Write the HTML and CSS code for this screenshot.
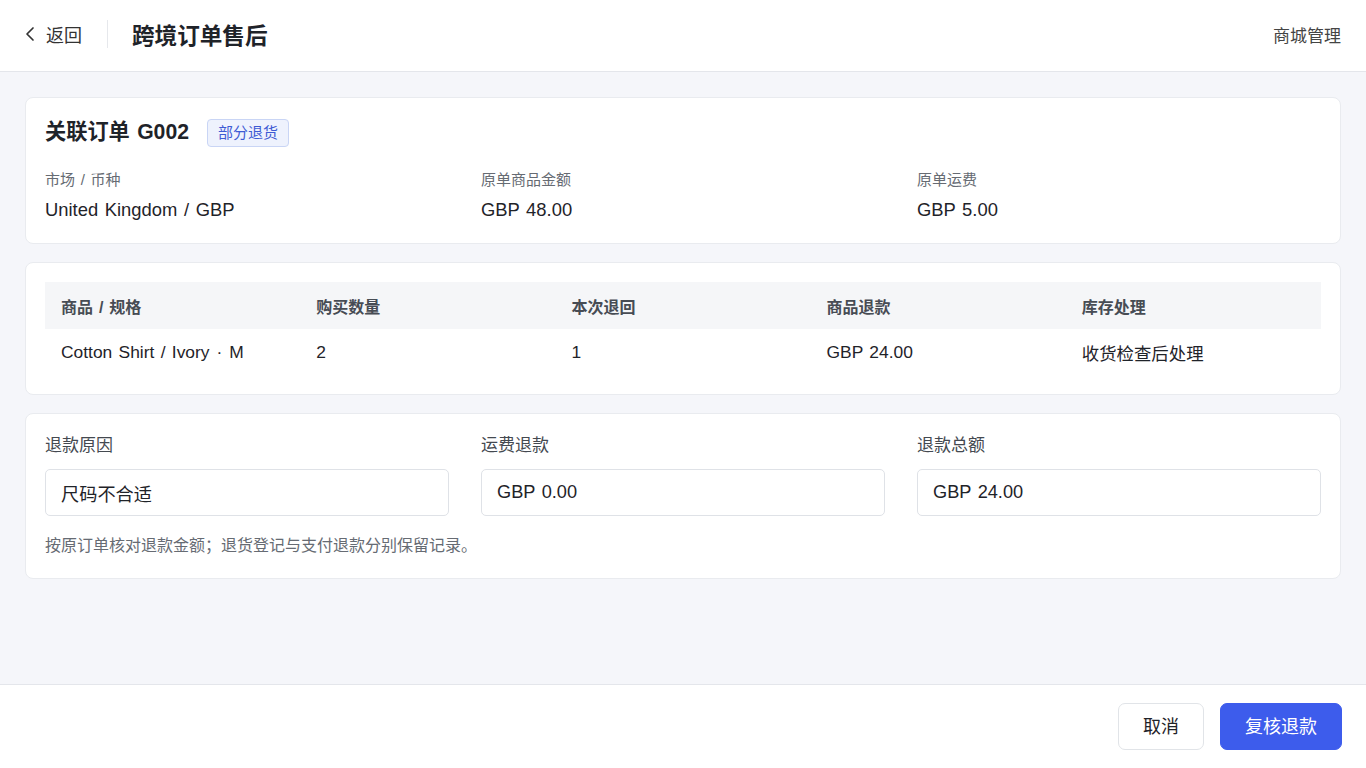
FILE: index.html
```html
<!DOCTYPE html>
<html lang="zh-CN">
<head>
<meta charset="utf-8">
<title>跨境订单售后</title>
<link rel="stylesheet" href="styles.css">
</head>
<body>
<div class="app">
  <header class="topbar">
    <div class="topbar-left">
      <a class="back" href="#">
        <svg class="back-icon" width="12" height="16" viewBox="0 0 12 16"><polyline points="9,2 3,8 9,14" fill="none" stroke="#333" stroke-width="1.7" stroke-linecap="round" stroke-linejoin="round"/></svg>
        <span>返回</span>
      </a>
      <span class="divider"></span>
      <h1 class="page-title">跨境订单售后</h1>
    </div>
    <div class="topbar-right">商城管理</div>
  </header>

  <main class="content">
    <section class="card card-order">
      <div class="order-head">
        <h2 class="order-title">关联订单 G002</h2>
        <span class="badge">部分退货</span>
      </div>
      <div class="info-grid">
        <div class="info">
          <div class="info-label">市场 / 币种</div>
          <div class="info-value">United Kingdom / GBP</div>
        </div>
        <div class="info">
          <div class="info-label">原单商品金额</div>
          <div class="info-value">GBP 48.00</div>
        </div>
        <div class="info">
          <div class="info-label">原单运费</div>
          <div class="info-value">GBP 5.00</div>
        </div>
      </div>
    </section>

    <section class="card card-table">
      <div class="table">
        <div class="tr th">
          <div class="td">商品 / 规格</div>
          <div class="td">购买数量</div>
          <div class="td">本次退回</div>
          <div class="td">商品退款</div>
          <div class="td">库存处理</div>
        </div>
        <div class="tr">
          <div class="td">Cotton Shirt / Ivory<span class="dot">·</span>M</div>
          <div class="td">2</div>
          <div class="td">1</div>
          <div class="td">GBP 24.00</div>
          <div class="td">收货检查后处理</div>
        </div>
      </div>
    </section>

    <section class="card card-form">
      <div class="form-grid">
        <div class="field">
          <label class="field-label">退款原因</label>
          <div class="input">尺码不合适</div>
        </div>
        <div class="field">
          <label class="field-label">运费退款</label>
          <div class="input">GBP 0.00</div>
        </div>
        <div class="field">
          <label class="field-label">退款总额</label>
          <div class="input">GBP 24.00</div>
        </div>
      </div>
      <p class="note">按原订单核对退款金额；退货登记与支付退款分别保留记录。</p>
    </section>
  </main>

  <footer class="footer">
    <button class="btn btn-default">取消</button>
    <button class="btn btn-primary">复核退款</button>
  </footer>
</div>
</body>
</html>
```

FILE: styles.css
```css
* { box-sizing: border-box; }
html, body { margin: 0; padding: 0; }
body {
  font-family: "Liberation Sans", "Noto Sans CJK SC", sans-serif;
  color: #1f2329;
  background: #f5f6fa;
  word-spacing: 1.5px;
}
.app {
  height: 100vh;
  display: flex;
  flex-direction: column;
}
.topbar {
  height: 72px;
  flex: none;
  background: #fff;
  border-bottom: 1px solid #e4e6eb;
  display: flex;
  align-items: center;
  justify-content: space-between;
  padding: 0 25px 3px 24px;
}
.topbar-left {
  display: flex;
  align-items: center;
}
.back {
  display: flex;
  align-items: center;
  gap: 10px;
  color: #333;
  text-decoration: none;
  font-size: 18px;
}
.back-icon { display: block; }
.divider {
  width: 1px;
  height: 28px;
  background: #e6e8ec;
  margin: 0 24px 0 25px;
}
.page-title {
  margin: 0;
  font-size: 22.6px;
  font-weight: 700;
  color: #1f2329;
}
.topbar-right {
  font-size: 17px;
  color: #444;
}

.content {
  flex: 1;
  padding: 25px 25px;
  display: flex;
  flex-direction: column;
  gap: 18px;
}
.card {
  background: #fff;
  border: 1px solid #e9ebef;
  border-radius: 8px;
  padding: 0 19px;
}

.card-order { padding-top: 21px; padding-bottom: 21px; }
.order-head {
  display: flex;
  align-items: center;
  gap: 18px;
  height: 28px;
}
.order-title {
  margin: 0;
  font-size: 21.2px;
  line-height: 26px;
  padding-bottom: 2px;
  font-weight: 700;
  color: #1f2329;
}
.badge {
  height: 28px;
  line-height: 26px;
  padding: 0 10px;
  font-size: 15px;
  color: #3e5bd4;
  background: #eef2fd;
  border: 1px solid #c9d5f5;
  border-radius: 4px;
}
.info-grid {
  display: grid;
  grid-template-columns: repeat(3, 1fr);
  gap: 32px;
  margin-top: 23px;
}
.info-label {
  font-size: 15px;
  line-height: 20px;
  color: #666b73;
}
.info-value {
  margin-top: 8px;
  font-size: 18.4px;
  line-height: 24px;
  color: #1f2329;
}

.card-table { padding-top: 19px; padding-bottom: 19px; }
.tr {
  display: grid;
  grid-template-columns: repeat(5, 1fr);
  height: 46px;
  align-items: center;
}
.tr.th {
  height: 47px;
  background: #f5f6f8;
  font-size: 16px;
  font-weight: 700;
  color: #474c54;
}
.tr .td { padding-left: 16px; }
.tr:not(.th) {
  font-size: 17.4px;
  color: #1f2329;
  padding-top: 1px;
}
.dot { margin: 0 7px; }

.card-form { padding-top: 20px; padding-bottom: 21px; }
.form-grid {
  display: grid;
  grid-template-columns: repeat(3, 1fr);
  gap: 32px;
}
.field-label {
  display: block;
  font-size: 17px;
  line-height: 22px;
  color: #444950;
  padding-top: 1px;
}
.input {
  margin-top: 12px;
  height: 47px;
  border: 1px solid #dfe2e7;
  border-radius: 5px;
  padding: 0 15px;
  display: flex;
  align-items: center;
  font-size: 18.2px;
  color: #1f2329;
}
.note {
  margin: 19px 0 0;
  font-size: 16px;
  line-height: 22px;
  color: #666b73;
}

.footer {
  height: 84px;
  flex: none;
  background: #fff;
  border-top: 1px solid #e4e6eb;
  display: flex;
  align-items: center;
  justify-content: flex-end;
  gap: 16px;
  padding: 0 24px;
}
.btn {
  height: 47px;
  border-radius: 7px;
  font-family: inherit;
  font-size: 18px;
  padding: 0 0 3px;
  cursor: pointer;
}
.btn-default {
  width: 86px;
  background: #fff;
  border: 1px solid #e1e4e8;
  color: #1f2329;
}
.btn-primary {
  width: 122px;
  background: #3d5cec;
  border: 1px solid #3d5cec;
  color: #fff;
}
```
